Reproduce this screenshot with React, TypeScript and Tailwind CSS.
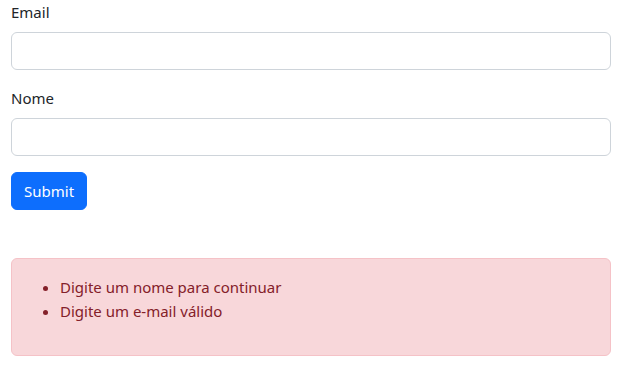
const App = () => {
  return (
    <div
      className="w-[633px] h-[368px] bg-white text-[#212529] text-[15px] leading-6"
      style={{ fontFamily: '"Noto Sans", "Open Sans", sans-serif' }}
    >
      <form className="ml-[11px] w-[600px]">
        <div className="mb-4">
          <label className="block mb-2">Email</label>
          <input
            type="email"
            className="block w-full h-[38px] px-3 border border-[#ced4da] rounded-[6px] bg-white"
          />
        </div>
        <div className="mb-4">
          <label className="block mb-2">Nome</label>
          <input
            type="text"
            className="block w-full h-[38px] px-3 border border-[#ced4da] rounded-[6px] bg-white"
          />
        </div>
        <button
          type="submit"
          className="h-[38px] px-3 bg-[#0d6efd] text-white rounded-[6px] border border-[#0d6efd]"
        >
          Submit
        </button>
      </form>

      <div className="ml-[11px] w-[600px] mt-12 p-4 bg-[#f8d7da] border border-[#f5c2c7] rounded-[6px] text-[#842029]">
        <ul className="list-disc pl-8 mb-4">
          <li>Digite um nome para continuar</li>
          <li>Digite um e-mail válido</li>
        </ul>
      </div>
    </div>
  );
};

export default App;
